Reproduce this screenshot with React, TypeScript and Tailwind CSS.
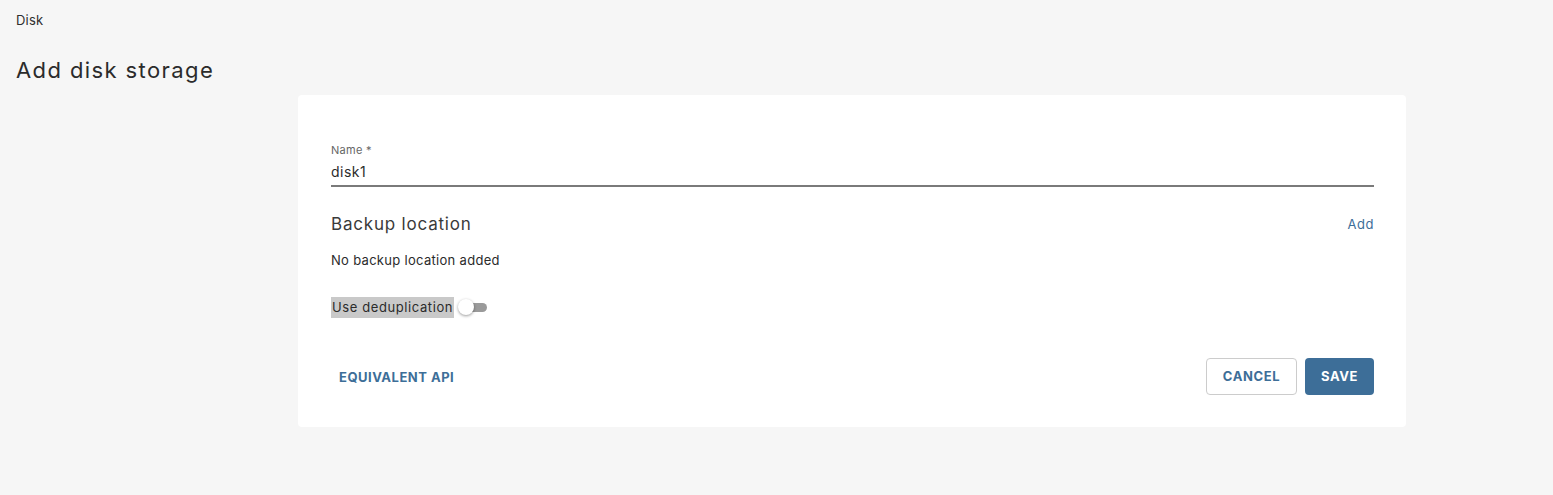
import React from "react";

export default function App() {
  return (
    <div
      className="min-h-[495px] w-full bg-[#f6f6f6] text-[#2b2b2b]"
      style={{ fontFamily: "Inter, 'Noto Sans', sans-serif" }}
    >
      <div className="px-4 pt-[12px]">
        <div className="text-[13px] leading-[16px] tracking-[0.2px] text-[#2f2f2f]">Disk</div>
        <h1 className="mt-[28px] text-[22px] font-normal leading-[28px] tracking-[1.4px] text-[#2b2b2b]">
          Add disk storage
        </h1>
      </div>
      <div className="mt-[11px] flex">
        <div className="ml-[298px] w-[1108px] rounded-[4px] bg-white pb-[32px] pl-[33px] pr-[32px] pt-[48px]">
          <div>
            <label className="block text-[11px] leading-[14px] tracking-[0.3px] text-[#666]">Name *</label>
            <div className="mt-[6px] border-b-2 border-[#7a7a7a] pb-[4px] text-[14px] leading-[18px] tracking-[0.5px] text-[#2b2b2b]">
              disk1
            </div>
          </div>
          <div className="mt-[26px] flex items-center justify-between">
            <div className="text-[17px] leading-[22px] tracking-[0.8px] text-[#3a3a3a]">Backup location</div>
            <button className="text-[13px] leading-[18px] tracking-[0.5px] text-[#3d6e98]">Add</button>
          </div>
          <div className="mt-[16px] text-[13px] leading-[18px] tracking-[0.3px] text-[#2b2b2b]">
            No backup location added
          </div>
          <div className="mt-[28px] flex items-center">
            <span className="bg-[#c9c9c9] px-[1px] text-[13px] leading-[21px] tracking-[0.6px] text-[#2b2b2b]">
              Use deduplication
            </span>
            <span className="relative ml-[5px] inline-block h-[9px] w-[28px] rounded-full bg-[#9a9a9a]">
              <span className="absolute left-[-1px] top-[-4px] h-[16px] w-[16px] rounded-full bg-white shadow-[0_1px_3px_rgba(0,0,0,0.4)]" />
            </span>
          </div>
          <div className="mt-[40px] flex items-center justify-between">
            <button className="ml-[8px] text-[13px] font-bold leading-[18px] tracking-[0.5px] text-[#3d6e98]">
              EQUIVALENT API
            </button>
            <div className="flex gap-[8px]">
              <button className="h-[37px] w-[91px] rounded-[4px] border border-[#cccccc] bg-white text-[13px] font-bold tracking-[0.6px] text-[#3d6e98]">
                CANCEL
              </button>
              <button className="h-[37px] w-[69px] rounded-[4px] bg-[#3d6e98] text-[13px] font-bold tracking-[0.6px] text-white">
                SAVE
              </button>
            </div>
          </div>
        </div>
      </div>
    </div>
  );
}
